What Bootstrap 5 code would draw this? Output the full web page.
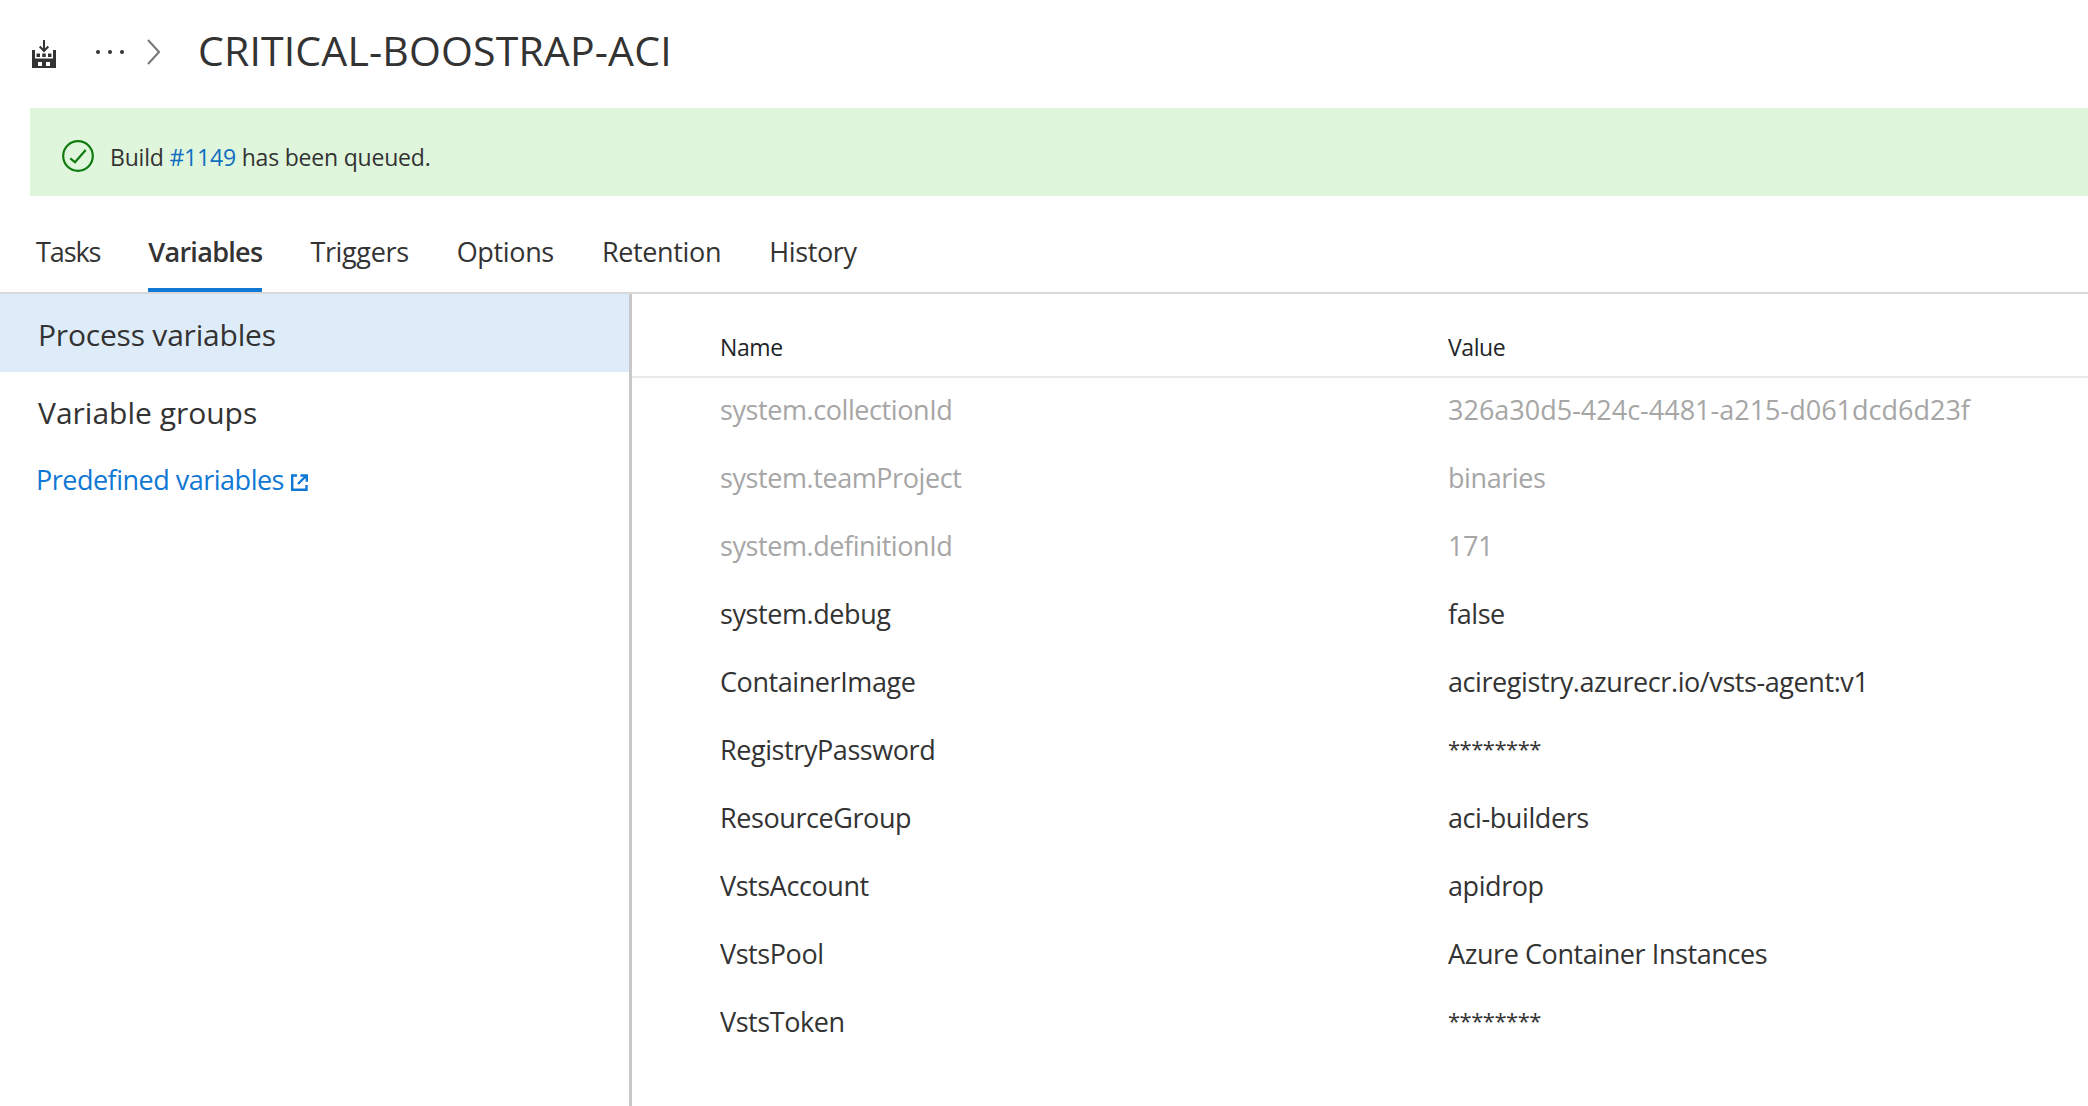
<!DOCTYPE html>
<html lang="en">
<head>
  <meta charset="UTF-8">
  <title>CRITICAL-BOOSTRAP-ACI</title>
  <link href="https://cdn.jsdelivr.net/npm/bootstrap@5.3.0/dist/css/bootstrap.min.css" rel="stylesheet">
  <style>
    body { font-family: "Open Sans", "Liberation Sans", sans-serif; color: #333; background: #fff; overflow: hidden; }
    .top-bar { height: 108px; padding-left: 32px; }
    .crumb-dots { margin: 0 0 5px 39px; width: 34px; }
    .crumb-sep { margin: 0 0 5px 18px; }
    .page-title { font-size: 41px; font-weight: 400; margin: 0 0 7px 38px; letter-spacing: .15px; line-height: 1; }
    .queued-bar { margin-left: 30px; height: 88px; background: #dff6dd; padding-left: 32px; font-size: 23px; letter-spacing: -.2px; gap: 16px; }
    .queued-bar span { margin-top: 10px; }
    .queued-bar svg { margin-top: 8px; }
    .queued-bar a { color: #106ebe; text-decoration: none; }
    .tab-strip { height: 98px; border-bottom: 2px solid #d8d8d8; padding: 0 0 0 36px; gap: 48px; font-size: 27px; letter-spacing: -.35px; }
    .tab-item { color: #333; text-decoration: none; height: 96px; padding-top: 38px; line-height: 36px; }
    .tab-item.tab-tight { letter-spacing: -1.1px; }
    .tab-item.active-tab { font-weight: 600; letter-spacing: -.7px; border-bottom: 4px solid #0f78d4; }
    .side-pane { width: 632px; height: 812px; border-right: 3px solid #c8c8c8; flex: none; }
    .side-item { height: 78px; padding-left: 38px; font-size: 30px; letter-spacing: -.2px; line-height: 82px; }
    .side-item.picked { background: #deecf9; }
    .side-item.wide-item { letter-spacing: 0; }
    .side-link { display: inline-block; margin: 10px 0 0 36px; font-size: 27px; letter-spacing: -.5px; color: #0f78d4; text-decoration: none; }
    .vars-table { width: 100%; margin: 0; table-layout: fixed; }
    .vars-table th, .vars-table td { border: 0; padding: 0; vertical-align: middle; }
    .vars-table th { font-weight: 400; font-size: 23px; letter-spacing: -.4px; height: 83px; padding-top: 24px; border-bottom: 2px solid #eaeaea; }
    .vars-table td { font-size: 27px; letter-spacing: -.42px; height: 68px; padding-bottom: 2px; color: #333; }
    .vars-table tr.sys td { color: #a6a6a6; }
    .vars-table td.guid-cell { letter-spacing: 0; }
    .name-cell { padding-left: 88px !important; width: 816px; }
    .secret-mask { display: inline-block; font-size: 22px; letter-spacing: -.5px; line-height: 1; transform: translateY(-3px); }
  </style>
</head>
<body>
  <div class="top-bar d-flex align-items-center">
    <svg width="24" height="28" viewBox="0 0 24 28" fill="#333">
      <path d="M0 10h3v8.500h18V10h3v18H0zM6 22v4h4v-4zM14 22v4h4v-4z" fill-rule="evenodd"/>
      <path d="M4.500 13.500h3.500V17H4.500zM10.250 13.500h3.500V17h-3.500zM16 13.500h3.500V17H16z"/>
      <path d="M12 0v11M7.700 6.500l4.300 4.500 4.300-4.500" fill="none" stroke="#333" stroke-width="2"/>
    </svg>
    <svg class="crumb-dots" width="34" height="6" viewBox="0 0 34 6" fill="#333"><circle cx="3" cy="3" r="2"/><circle cx="15" cy="3" r="2"/><circle cx="27" cy="3" r="2"/></svg>
    <svg class="crumb-sep" width="13" height="26" viewBox="0 0 13 26" fill="none" stroke="#767676" stroke-width="2"><path d="M1 1l11 12L1 25"/></svg>
    <h1 class="page-title">CRITICAL-BOOSTRAP-ACI</h1>
  </div>

  <div class="queued-bar d-flex align-items-center">
    <svg width="32" height="32" viewBox="0 0 32 32" fill="none" stroke="#107c10" stroke-width="2.200"><circle cx="16" cy="16" r="14.800"/><path d="M8.300 18.300l4.700 4L23.700 10"/></svg>
    <span>Build <a href="#">#1149</a> has been queued.</span>
  </div>

  <nav class="tab-strip d-flex">
    <a class="tab-item tab-tight" href="#">Tasks</a>
    <a class="tab-item active-tab" href="#">Variables</a>
    <a class="tab-item" href="#">Triggers</a>
    <a class="tab-item" href="#">Options</a>
    <a class="tab-item" href="#">Retention</a>
    <a class="tab-item" href="#">History</a>
  </nav>

  <div class="d-flex">
    <div class="side-pane">
      <div class="side-item picked">Process variables</div>
      <div class="side-item wide-item">Variable groups</div>
      <a class="side-link" href="#">Predefined variables
        <svg width="17" height="17" viewBox="0 0 17 17" fill="none" stroke="#0f78d4" stroke-width="2.400"><path d="M6 1.500H1.200v14.300h14.300V11M7 10l8-8M9.500 1.500h6.300v6.300"/></svg>
      </a>
    </div>
    <div class="flex-grow-1">
      <table class="table vars-table">
        <thead><tr><th class="name-cell">Name</th><th>Value</th></tr></thead>
        <tbody>
          <tr class="sys"><td class="name-cell">system.collectionId</td><td class="guid-cell">326a30d5-424c-4481-a215-d061dcd6d23f</td></tr>
          <tr class="sys"><td class="name-cell">system.teamProject</td><td>binaries</td></tr>
          <tr class="sys"><td class="name-cell">system.definitionId</td><td>171</td></tr>
          <tr><td class="name-cell">system.debug</td><td>false</td></tr>
          <tr><td class="name-cell">ContainerImage</td><td>aciregistry.azurecr.io/vsts-agent:v1</td></tr>
          <tr><td class="name-cell">RegistryPassword</td><td><span class="secret-mask">********</span></td></tr>
          <tr><td class="name-cell">ResourceGroup</td><td>aci-builders</td></tr>
          <tr><td class="name-cell">VstsAccount</td><td>apidrop</td></tr>
          <tr><td class="name-cell">VstsPool</td><td>Azure Container Instances</td></tr>
          <tr><td class="name-cell">VstsToken</td><td><span class="secret-mask">********</span></td></tr>
        </tbody>
      </table>
    </div>
  </div>
  <script src="https://cdn.jsdelivr.net/npm/bootstrap@5.3.0/dist/js/bootstrap.bundle.min.js"></script>
</body>
</html>
